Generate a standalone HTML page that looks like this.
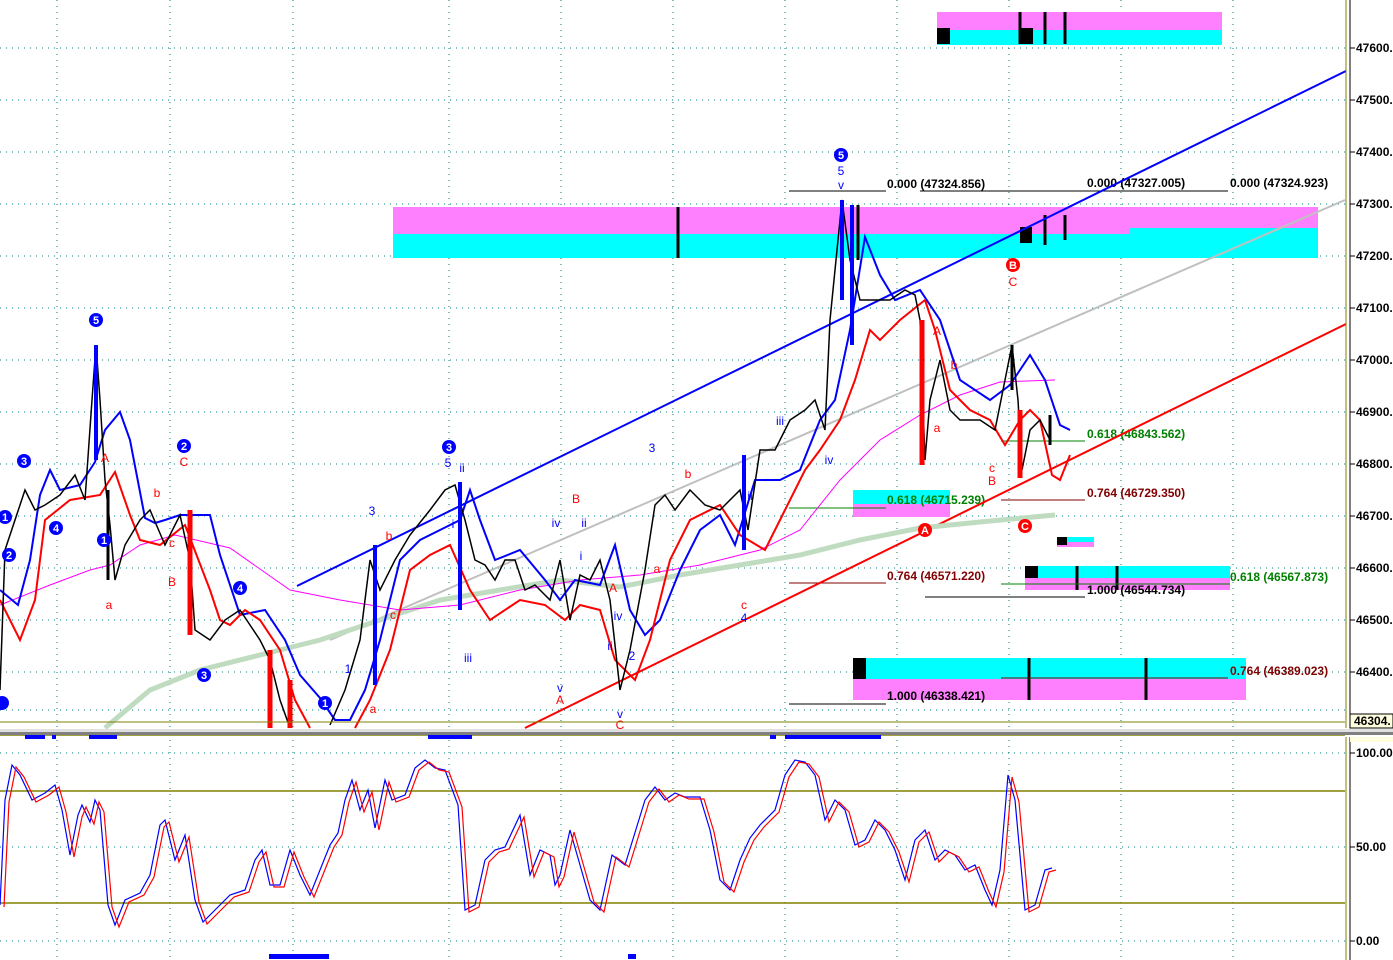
<!DOCTYPE html>
<html><head><meta charset="utf-8"><style>
html,body{margin:0;padding:0;background:#fff;width:1393px;height:960px;overflow:hidden}
svg text{font-family:"Liberation Sans",Arial,sans-serif}
</style></head><body>
<svg width="1393" height="960" viewBox="0 0 1393 960" xmlns="http://www.w3.org/2000/svg">
<rect width="1393" height="960" fill="#fff"/>
<!-- grid main -->
<g stroke="#008080" stroke-width="1" stroke-dasharray="1 5" fill="none">
<path d="M0 48H1345M0 100H1345M0 152H1345M0 204H1345M0 256H1345M0 308H1345M0 360H1345M0 412H1345M0 464H1345M0 516H1345M0 568H1345M0 620H1345M0 672H1345M0 710H1345"/>
<path d="M57 0V728M170 0V728M293 0V728M449 0V728M561 0V728M673 0V728M785 0V728M897 0V728M1009 0V728M1121 0V728M1233 0V728"/>
<path d="M0 753H1345M0 847H1345M0 941H1345"/>
<path d="M57 740V960M170 740V960M293 740V960M449 740V960M561 740V960M673 740V960M785 740V960M897 740V960M1009 740V960M1121 740V960M1233 740V960"/>
</g>
<!-- bands -->
<rect x="937" y="12" width="285" height="18" fill="#ff80ff"/><rect x="937" y="30" width="285" height="15" fill="#00ffff"/>
<rect x="937" y="28" width="13" height="16" fill="#000"/><rect x="1020" y="28" width="13" height="16" fill="#000"/>
<path d="M1020 12V44M1045 12V44M1065 12V44" stroke="#000" stroke-width="3"/>
<rect x="393" y="207" width="925" height="27" fill="#ff80ff"/><rect x="393" y="234" width="925" height="24" fill="#00ffff"/>
<rect x="1130" y="228" width="188" height="6" fill="#00ffff"/>
<path d="M678 207V258M852 207V258M1045 215V245M1065 215V240" stroke="#000" stroke-width="3"/>
<rect x="1020" y="227" width="12" height="16" fill="#000"/>
<rect x="853" y="490" width="97" height="14" fill="#00ffff"/><rect x="853" y="504" width="97" height="13" fill="#ff80ff"/>
<rect x="1025" y="566" width="205" height="12" fill="#00ffff"/><rect x="1025" y="578" width="205" height="12" fill="#ff80ff"/>
<rect x="1025" y="566" width="13" height="12" fill="#000"/>
<path d="M1077 566V590M1117 566V590" stroke="#000" stroke-width="3"/>
<rect x="1057" y="537" width="37" height="5" fill="#00ffff"/><rect x="1057" y="542" width="37" height="5" fill="#ff80ff"/><rect x="1057" y="537" width="10" height="8" fill="#000"/>
<rect x="853" y="658" width="393" height="21" fill="#00ffff"/><rect x="853" y="679" width="393" height="21" fill="#ff80ff"/>
<rect x="853" y="658" width="13" height="21" fill="#000"/>
<path d="M1029 658V700M1146 658V700" stroke="#000" stroke-width="3"/>
<!-- fib lines -->
<g stroke-width="1" fill="none">
<path d="M789 191H886M1001 191H1228M920 191H1080" stroke="#000"/>
<path d="M1001 441H1085M789 508H886" stroke="#008000"/>
<path d="M1001 500H1085M789 583H886M1001 678H1228" stroke="#800000"/>
<path d="M925 597H1085M789 704H886M1001 584H1230" stroke="#000"/>
<path d="M1001 584H1230" stroke="#008000"/>
</g>
<g font-size="12" font-weight="bold">
<text x="887" y="188" fill="#000">0.000 (47324.856)</text>
<text x="1087" y="187" fill="#000">0.000 (47327.005)</text>
<text x="1230" y="187" fill="#000">0.000 (47324.923)</text>
<text x="1087" y="438" fill="#008000">0.618 (46843.562)</text>
<text x="887" y="504" fill="#008000">0.618 (46715.239)</text>
<text x="1087" y="497" fill="#800000">0.764 (46729.350)</text>
<text x="887" y="580" fill="#800000">0.764 (46571.220)</text>
<text x="1230" y="581" fill="#008000">0.618 (46567.873)</text>
<text x="1087" y="594" fill="#000">1.000 (46544.734)</text>
<text x="1230" y="675" fill="#800000">0.764 (46389.023)</text>
<text x="887" y="700" fill="#000">1.000 (46338.421)</text>
</g>
<!-- trend lines -->
<path d="M297 586L1348 70" stroke="#0000ff" stroke-width="2"/>
<path d="M330 640L1345 200" stroke="#c0c0c0" stroke-width="2"/>
<path d="M525 728L1348 323" stroke="#ff0000" stroke-width="2"/>
<!-- slow MA -->
<path d="M105 728L150 690L200 670L260 655L320 640L380 620L440 600L500 590L560 580L620 587L680 575L740 565L800 555L860 540L920 528L980 522L1055 515" stroke="#c0dcc0" stroke-width="5" fill="none"/>
<!-- magenta MA -->
<path d="M0 605L50 585L90 570L110 565L140 545L175 535L230 548L290 590L340 600L400 610L460 605L520 590L580 580L640 575L700 565L760 550L800 530L840 480L880 440L920 415L960 395L1000 382L1055 380" stroke="#ff00ff" stroke-width="1" fill="none"/>
<!-- blue envelope -->
<path d="M0 590L18 605L30 560L40 495L50 470L60 490L80 485L95 462L105 430L120 412L130 440L145 518L155 523L165 520L180 515L200 515L210 515L220 555L240 615L265 610L285 640L300 675L320 698L335 720L350 720L365 690L380 640L400 560L420 540L440 530L460 520L470 490L480 520L495 560L520 550L545 580L560 600L575 580L600 585L615 545L630 610L645 635L660 620L680 570L700 530L720 515L735 545L755 480L780 480L800 470L820 420L835 400L850 330L865 237L880 275L895 300L920 290L940 320L960 380L990 400L1010 385L1030 355L1045 380L1060 425L1070 430" stroke="#0000ff" stroke-width="2" fill="none"/>
<!-- red lower -->
<path d="M0 600L20 640L35 600L45 520L70 500L100 495L115 472L130 515L140 540L160 545L185 525L210 590L220 620L230 625L245 610L260 620L280 650L295 700L310 728M355 728L370 700L390 650L410 570L430 555L450 545L470 590L490 620L520 600L545 605L565 620L580 605L600 610L615 660L635 680L650 640L670 560L690 520L720 505L740 535L765 550L785 510L805 470L820 450L840 420L855 380L870 330L880 340L900 320L925 300L935 330L950 390L970 410L990 420L1005 445L1020 420L1030 410L1040 420L1052 475L1060 480L1070 455" stroke="#ff0000" stroke-width="2" fill="none"/>
<!-- price candles approximation -->
<path d="M0 690L5 550L15 520L25 490L35 510L45 505L60 495L75 475L85 500L92 400L96 345L100 400L105 480L110 525L115 580L125 545L140 520L150 510L165 545L180 515L190 560L195 630L210 640L225 620L240 610L250 625L260 640L270 660L280 700L290 728M330 725L345 690L360 640L370 560L380 590L395 560L410 535L430 510L445 490L455 485L465 520L475 560L485 565L495 580L505 560L515 560L525 590L535 585L550 600L560 560L570 620L580 575L590 580L600 560L610 600L620 690L630 650L645 570L655 505L665 495L675 510L690 490L705 505L720 510L740 490L748 530L760 450L775 450L790 420L805 410L815 400L825 430L830 320L842 200L850 260L860 300L875 300L890 300L905 290L915 295L920 320L925 460L930 400L940 360L950 410L960 420L980 420L995 430L1005 380L1012 345L1018 400L1022 470L1030 430L1040 420L1050 440" stroke="#000" stroke-width="1.5" fill="none"/>
<path d="M96 345V460M842 200V300M852 205V345M460 482V610M375 545V685M744 455V550" stroke="#0000ff" stroke-width="4"/>
<path d="M922 320V465M1020 410V478M190 510V635M270 650V728M290 680V728" stroke="#ff0000" stroke-width="5"/>
<path d="M1012 345V390M1050 415V445M108 490V580M858 205V260M678 207V258" stroke="#000" stroke-width="3"/>
<!-- wave labels -->
<g font-size="12" text-anchor="middle">
<g fill="#0000ff">
<circle cx="96" cy="320" r="7"/><circle cx="184" cy="446" r="7"/><circle cx="24" cy="461" r="7"/><circle cx="5" cy="517" r="7"/><circle cx="9" cy="555" r="7"/><circle cx="56" cy="528" r="7"/><circle cx="104" cy="540" r="7"/><circle cx="240" cy="588" r="7"/><circle cx="204" cy="675" r="7"/><circle cx="325" cy="703" r="7"/><circle cx="449" cy="447" r="7"/><circle cx="841" cy="155" r="7"/><circle cx="2" cy="703" r="7"/>
</g>
<g fill="#ff0000"><circle cx="1013" cy="265" r="7"/><circle cx="925" cy="530" r="7"/><circle cx="1025" cy="526" r="7"/></g>
<g fill="#fff" font-size="11" font-weight="bold">
<text x="96" y="324">5</text><text x="184" y="450">2</text><text x="24" y="465">3</text><text x="5" y="521">1</text><text x="9" y="559">2</text><text x="56" y="532">4</text><text x="104" y="544">1</text><text x="240" y="592">4</text><text x="204" y="679">3</text><text x="325" y="707">1</text><text x="449" y="451">3</text><text x="841" y="159">5</text>
<text x="1013" y="269">B</text><text x="925" y="534">A</text><text x="1025" y="530">C</text>
</g>
<g fill="#0000ff">
<text x="841" y="175">5</text><text x="841" y="189">v</text><text x="448" y="467">5</text><text x="462" y="472">ii</text><text x="372" y="515">3</text><text x="348" y="673">1</text><text x="453" y="528">i</text><text x="468" y="662">iii</text><text x="556" y="527">iv</text><text x="584" y="527">ii</text><text x="581" y="560">i</text><text x="560" y="692">v</text><text x="620" y="718">v</text><text x="652" y="452">3</text><text x="618" y="620">iv</text><text x="610" y="650">ii</text><text x="632" y="660">2</text><text x="780" y="425">iii</text><text x="829" y="464">iv</text><text x="750" y="500">ii</text><text x="744" y="622">4</text>
</g>
<g fill="#ff0000">
<text x="184" y="466">C</text><text x="157" y="497">b</text><text x="172" y="547">c</text><text x="172" y="586">B</text><text x="109" y="609">a</text><text x="105" y="462">A</text><text x="576" y="503">B</text><text x="389" y="540">b</text><text x="393" y="619">c</text><text x="373" y="713">a</text><text x="560" y="704">A</text><text x="688" y="478">b</text><text x="657" y="573">a</text><text x="744" y="609">c</text><text x="613" y="592">A</text><text x="620" y="729">C</text><text x="1013" y="286">C</text><text x="937" y="335">A</text><text x="954" y="369">b</text><text x="937" y="432">a</text><text x="992" y="472">c</text><text x="992" y="485">B</text>
</g>
</g>
<!-- bottom of main / separator -->
<path d="M0 722H1345" stroke="#808000" stroke-width="1"/>
<rect x="0" y="729" width="1393" height="3" fill="#e0e0e0"/>
<rect x="0" y="732" width="1393" height="3" fill="#808080"/>
<path d="M0 735H1345M0 791H1345M0 903H1345" stroke="#808000" stroke-width="1.5"/>
<rect x="25" y="735" width="20" height="4" fill="#0000ff"/><rect x="52" y="735" width="4" height="4" fill="#0000ff"/><rect x="89" y="735" width="28" height="4" fill="#0000ff"/><rect x="428" y="735" width="44" height="4" fill="#0000ff"/><rect x="770" y="735" width="6" height="4" fill="#0000ff"/><rect x="785" y="735" width="96" height="4" fill="#0000ff"/>
<rect x="269" y="954" width="60" height="5" fill="#0000ff"/><rect x="628" y="954" width="8" height="5" fill="#0000ff"/>
<!-- oscillator -->
<g fill="none" stroke-width="1.2">
<path id="osc" d="M0 905L5 800L12 765L20 775L32 800L45 793L55 785L62 810L70 855L78 815L82 805L90 822L95 800L100 810L108 905L115 925L125 900L140 893L150 875L160 825L165 820L175 860L185 835L195 900L203 922L215 910L230 895L245 890L255 860L262 850L270 885L280 885L290 850L300 875L310 895L320 870L330 845L338 833L345 800L352 780L360 810L368 790L375 828L385 780L392 800L405 795L415 768L425 760L435 768L445 770L458 805L465 910L475 905L485 860L495 850L505 847L520 815L530 875L540 850L550 855L555 885L560 875L570 830L580 865L590 900L600 910L612 855L625 865L645 800L655 787L665 800L675 793L685 797L700 797L710 830L720 880L730 890L740 860L750 838L760 825L775 810L785 775L795 760L805 762L815 775L825 820L835 800L845 810L855 845L865 840L875 820L885 830L895 850L905 880L915 840L925 830L935 860L945 850L955 855L965 870L975 865L985 890L992 905L1000 870L1008 775L1015 800L1025 910L1035 905L1045 870L1052 868" stroke="#0000ff"/>
<path d="M0 905L5 800L12 765L20 775L32 800L45 793L55 785L62 810L70 855L78 815L82 805L90 822L95 800L100 810L108 905L115 925L125 900L140 893L150 875L160 825L165 820L175 860L185 835L195 900L203 922L215 910L230 895L245 890L255 860L262 850L270 885L280 885L290 850L300 875L310 895L320 870L330 845L338 833L345 800L352 780L360 810L368 790L375 828L385 780L392 800L405 795L415 768L425 760L435 768L445 770L458 805L465 910L475 905L485 860L495 850L505 847L520 815L530 875L540 850L550 855L555 885L560 875L570 830L580 865L590 900L600 910L612 855L625 865L645 800L655 787L665 800L675 793L685 797L700 797L710 830L720 880L730 890L740 860L750 838L760 825L775 810L785 775L795 760L805 762L815 775L825 820L835 800L845 810L855 845L865 840L875 820L885 830L895 850L905 880L915 840L925 830L935 860L945 850L955 855L965 870L975 865L985 890L992 905L1000 870L1008 775L1015 800L1025 910L1035 905L1045 870L1052 868" stroke="#ff0000" transform="translate(4 2)"/>
</g>
<!-- right axis -->
<rect x="1346" y="0" width="47" height="960" fill="#fff"/>
<path d="M1346 0V728M1346 737V960" stroke="#808000" stroke-width="1"/>
<path d="M1350 0V728M1350 737V960" stroke="#000" stroke-width="1"/>
<g stroke="#000" stroke-width="1">
<path d="M1350 48h5M1350 100h5M1350 152h5M1350 204h5M1350 256h5M1350 308h5M1350 360h5M1350 412h5M1350 464h5M1350 516h5M1350 568h5M1350 620h5M1350 672h5M1350 753h5M1350 847h5M1350 941h5"/>
</g>
<g font-size="12" font-weight="bold" fill="#000">
<text x="1356" y="52">47600.</text><text x="1356" y="104">47500.</text><text x="1356" y="156">47400.</text><text x="1356" y="208">47300.</text><text x="1356" y="260">47200.</text><text x="1356" y="312">47100.</text><text x="1356" y="364">47000.</text><text x="1356" y="416">46900.</text><text x="1356" y="468">46800.</text><text x="1356" y="520">46700.</text><text x="1356" y="572">46600.</text><text x="1356" y="624">46500.</text><text x="1356" y="676">46400.</text>
<text x="1356" y="757">100.00</text><text x="1356" y="851">50.00</text><text x="1356" y="945">0.00</text>
</g>
<rect x="1350" y="714" width="43" height="14" fill="#ffffe0" stroke="#000"/>
<text x="1354" y="725" font-size="12" font-weight="bold">46304.</text>
<rect x="1350" y="737" width="43" height="5" fill="#ffffe0"/>
<rect x="0" y="729" width="1393" height="3" fill="#e0e0e0"/><rect x="0" y="732" width="1393" height="3" fill="#808080"/>
</svg>
</body></html>
